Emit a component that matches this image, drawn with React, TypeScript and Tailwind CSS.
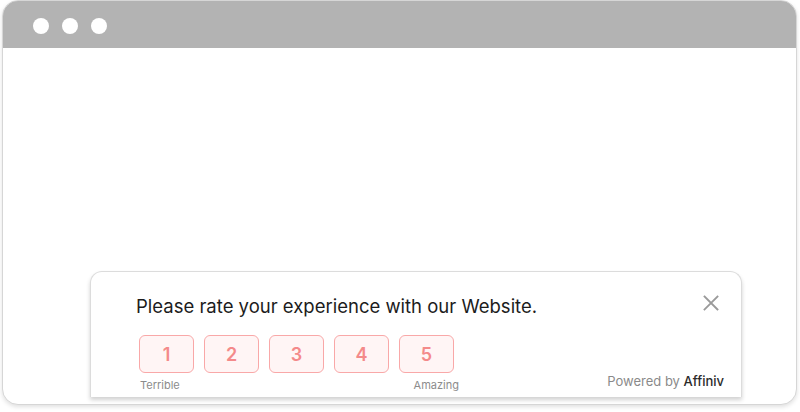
const ratings = [1, 2, 3, 4, 5];

function CloseIcon() {
  return (
    <svg viewBox="0 0 16 16" className="h-4 w-4" fill="none" stroke="#9a9a9a" strokeWidth={1.8} strokeLinecap="square">
      <path d="M1.5 1.5l13 13M14.5 1.5l-13 13" />
    </svg>
  );
}

export default function App() {
  return (
    <div className="h-[412px] w-[800px] bg-white" style={{ fontFamily: "Inter, 'Noto Sans', sans-serif" }}>
      <div className="ml-[2px] flex h-[405px] w-[795px] flex-col overflow-hidden rounded-[16px] border border-[#d6d6d6] bg-white shadow-[0_2px_4px_rgba(0,0,0,0.12)]">
        {/* Browser chrome */}
        <div className="flex h-[47px] shrink-0 items-center gap-[13px] bg-[#b3b3b3] pl-[30px] pt-[2px]">
          <span className="h-4 w-4 rounded-full bg-white" />
          <span className="h-4 w-4 rounded-full bg-white" />
          <span className="h-4 w-4 rounded-full bg-white" />
        </div>

        <div className="flex flex-1 flex-col justify-end">
          {/* Survey popup */}
          <div className="mb-[7px] ml-[87px] flex h-[126px] w-[652px] justify-between rounded-t-[12px] border border-b-0 border-[#dcdcdc] bg-white shadow-[0_3px_4px_rgba(0,0,0,0.18)]">
            <div className="pl-[45px] pt-[22px]">
              <p className="text-[18.5px] leading-6 text-[#1c1c1c]">Please rate your experience with our Website.</p>
              <div className="mt-[17px] flex gap-[10px] pl-[3px]">
                {ratings.map((n) => (
                  <button
                    key={n}
                    className="flex h-[38px] w-[55px] items-center justify-center rounded-[6px] border border-[#f9a8a8] bg-[#fff5f5] text-[18px] font-semibold text-[#f48a8a]"
                  >
                    {n}
                  </button>
                ))}
              </div>
              <div className="mt-[5px] flex w-[323px] justify-between pl-[4px] text-[11px] leading-[14px] text-[#8c8c8c]">
                <span>Terrible</span>
                <span>Amazing</span>
              </div>
            </div>

            <div className="flex flex-col items-end justify-between pb-[8px] pr-[17px] pt-[23px]">
              <div className="mr-[5px]">
                <CloseIcon />
              </div>
              <p className="text-[13px] leading-4 text-[#8a8a8a]">
                Powered by <span className="font-medium text-[#2b2b2b]">Affiniv</span>
              </p>
            </div>
          </div>
        </div>
      </div>
    </div>
  );
}
